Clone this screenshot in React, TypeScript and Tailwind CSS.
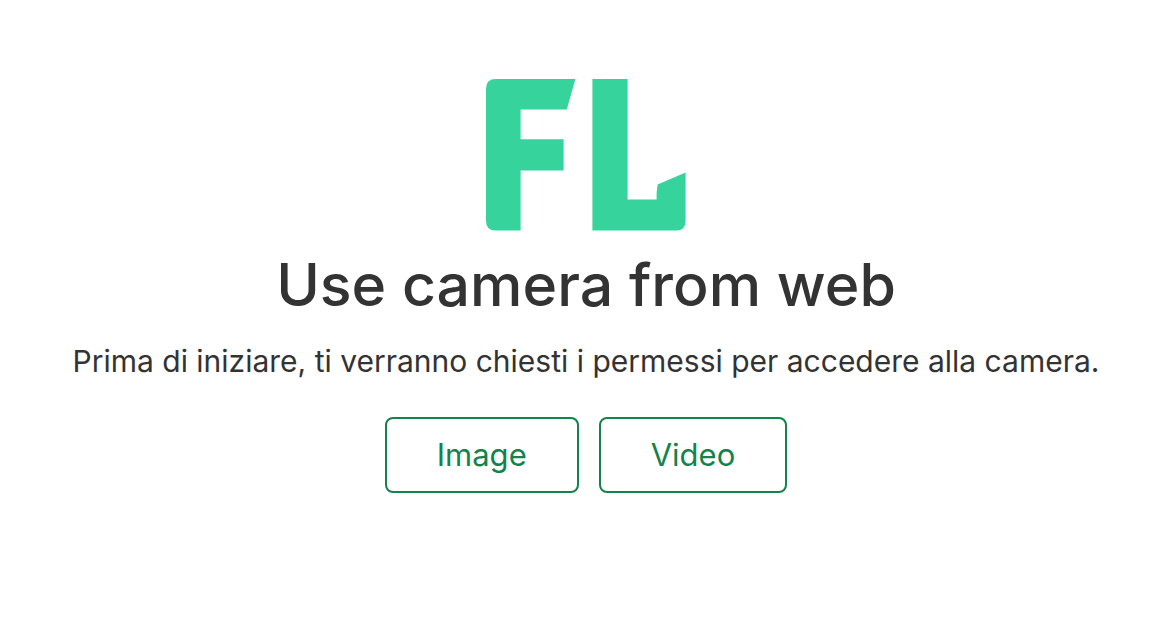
function Logo() {
  return (
    <svg
      className="block h-[152px] w-[200px]"
      viewBox="0 0 200 152"
      fill="#37d39d"
      role="img"
      aria-label="FL"
    >
      <path d="M9.500 0H89.400L80.800 30.400H34.600V60.300H77.600V91.400H34.600V151.500H9.500Q0 151.500 0 142V9.500Q0 0 9.500 0Z" />
      <path d="M106.400 0H141.600V120.400H170.600V114L171.600 105.500L199.600 93.500V142Q199.600 151.500 190.500 151.500H106.400Z" />
    </svg>
  );
}

function OutlineButton({ label }: { label: string }) {
  return (
    <button
      type="button"
      className="rounded-lg border-2 border-[#13834b] bg-white px-[50px] py-3 text-[31px] leading-[48px] text-[#13834b] hover:bg-[#13834b] hover:text-white"
    >
      {label}
    </button>
  );
}

export default function App() {
  return (
    <main className="flex min-h-screen flex-col items-center bg-white px-8 pt-[79px] pb-12 text-center font-['Inter','Liberation_Sans',sans-serif] text-[#333333]">
      <Logo />
      <h1 className="mt-4 text-[59px] leading-[76px] font-medium">Use camera from web</h1>
      <p className="mt-[14px] text-[30px] leading-[48px]">
        Prima di iniziare, ti verranno chiesti i permessi per accedere alla camera.
      </p>
      <div className="mt-8 flex flex-wrap justify-center gap-5">
        <OutlineButton label="Image" />
        <OutlineButton label="Video" />
      </div>
    </main>
  );
}
